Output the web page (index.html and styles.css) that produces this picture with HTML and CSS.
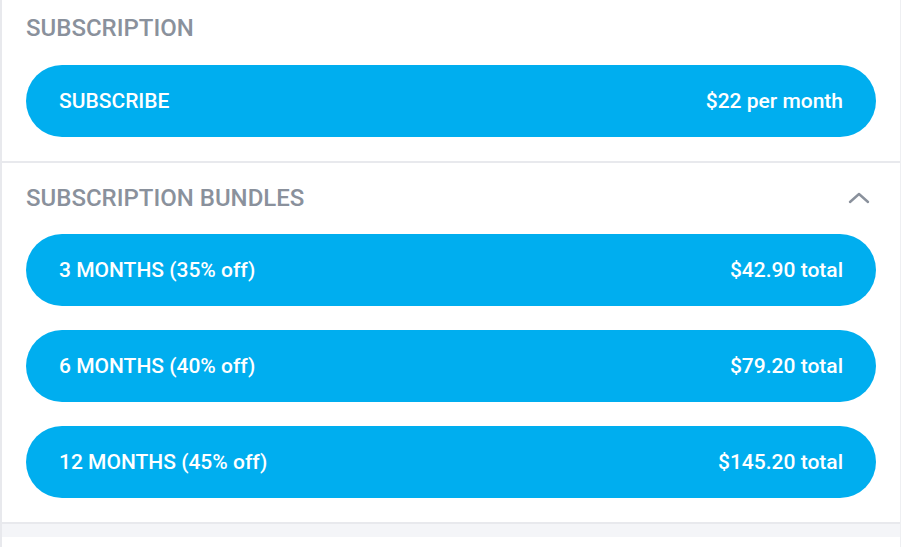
FILE: index.html
```html
<!DOCTYPE html>
<html>
<head>
<meta charset="utf-8">
<link rel="stylesheet" href="styles.css">
</head>
<body>
<div class="panel">
  <section class="section first">
    <h2 class="heading">SUBSCRIPTION</h2>
    <button class="plan"><span>SUBSCRIBE</span><span>$22 per month</span></button>
  </section>
  <section class="section">
    <div class="head-row">
      <h2 class="heading">SUBSCRIPTION BUNDLES</h2>
      <svg class="chev" width="22" height="14" viewBox="0 0 22 14"><path d="M2 11 L11 3 L20 11" fill="none" stroke="#8a919c" stroke-width="2.4" stroke-linecap="round" stroke-linejoin="round"/></svg>
    </div>
    <div class="list">
      <button class="plan"><span>3 MONTHS (35% off)</span><span>$42.90 total</span></button>
      <button class="plan"><span>6 MONTHS (40% off)</span><span>$79.20 total</span></button>
      <button class="plan"><span>12 MONTHS (45% off)</span><span>$145.20 total</span></button>
    </div>
  </section>
  <div class="band"></div>
</div>
</body>
</html>
```
FILE: styles.css
```css
* { box-sizing: border-box; }
html, body { margin: 0; padding: 0; background: #fff; }
body { font-family: Roboto, "Noto Sans", sans-serif; }
.panel {
  width: 901px;
  height: 547px;
  border-left: 2px solid #e8e9ed;
  border-right: 1px solid #eeeff2;
  overflow: hidden;
}
.section {
  padding: 14px 24px 24px 24px;
  border-bottom: 2px solid #e8e9ed;
}
.heading {
  margin: 0;
  font-size: 24px;
  font-weight: 500;
  color: #8a919c;
  line-height: 28px;
}
.first .heading { margin-bottom: 23px; }
.section:not(.first) { padding-top: 21px; }
.head-row {
  display: flex;
  align-items: center;
  justify-content: space-between;
  margin-bottom: 22px;
}
.chev { margin-right: 6px; }
.list { display: flex; flex-direction: column; gap: 24px; }
.plan {
  display: flex;
  justify-content: space-between;
  align-items: center;
  width: 100%;
  height: 72px;
  padding: 0 33px;
  border: none;
  border-radius: 36px;
  background: #00aeef;
  color: #fff;
  font-family: Roboto, "Noto Sans", sans-serif;
  font-size: 21px;
  font-weight: 500;
}
.band { height: 13px; background: #f4f5f8; }
```
